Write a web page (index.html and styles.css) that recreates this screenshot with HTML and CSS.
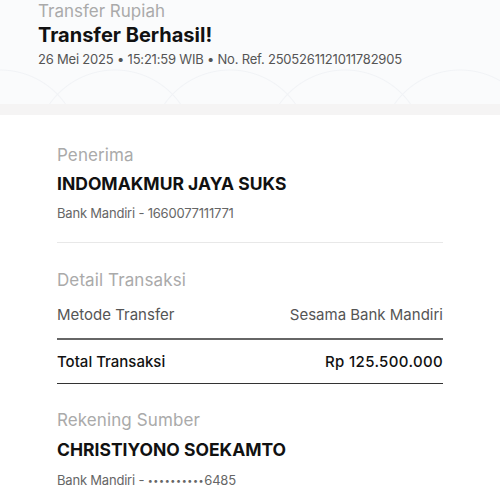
FILE: index.html
```html
<html>
    <head>
        <link rel="stylesheet" href="styles.css">
    </head>
    <body>
        <div class="header">
            <div class="kind">Transfer Rupiah</div>
            <div class="status">Transfer Berhasil!</div>
            <div class="meta">26 Mei 2025 &bull; 15:21:59 WIB &bull; No. Ref. 2505261121011782905</div>
        </div>
        <div class="strip"></div>
        <div class="card">
            <div class="section">
                <div class="label">Penerima</div>
                <div class="name">INDOMAKMUR JAYA SUKS</div>
                <div class="account">Bank Mandiri - 1660077111771</div>
            </div>
            <div class="section detail">
                <div class="label">Detail Transaksi</div>
                <div class="row">
                    <span>Metode Transfer</span>
                    <span>Sesama Bank Mandiri</span>
                </div>
                <div class="row total">
                    <span>Total Transaksi</span>
                    <span class="amount">Rp 125.500.000</span>
                </div>
            </div>
            <div class="section source">
                <div class="label">Rekening Sumber</div>
                <div class="name">CHRISTIYONO SOEKAMTO</div>
                <div class="account">Bank Mandiri - <span class="mask">&bull;&bull;&bull;&bull;&bull;&bull;&bull;&bull;&bull;&bull;</span>6485</div>
            </div>
        </div>
    </body>
</html>
```

FILE: styles.css
```css
body
{
    margin:0;
    background:#fff;
    font-family:Inter,"Noto Sans",sans-serif;
    color:#111;
}
.header
{
    height:104px;
    box-sizing:border-box;
    padding:0 38px;
    background-color:#fafbfc;
    background-image:
        radial-gradient(circle at 0 150px, transparent 79px, #f1f3f6 80px, transparent 81px),
        radial-gradient(circle at 115px 150px, transparent 79px, #f1f3f6 80px, transparent 81px),
        radial-gradient(circle at 230px 150px, transparent 79px, #f1f3f6 80px, transparent 81px),
        radial-gradient(circle at 345px 150px, transparent 79px, #f1f3f6 80px, transparent 81px),
        radial-gradient(circle at 460px 150px, transparent 79px, #f1f3f6 80px, transparent 81px);
}
.kind
{
    font-size:17px;
    line-height:22px;
    color:#aaa;
}
.status
{
    font-size:20px;
    font-weight:700;
    line-height:26px;
}
.meta
{
    font-size:13px;
    line-height:16px;
    color:#555;
    margin-top:3px;
    letter-spacing:-0.2px;
}
.strip
{
    height:11px;
    background:#f5f4f4;
}
.card
{
    padding:29px 57px 0;
}
.section
{
    padding-bottom:21px;
    border-bottom:1px solid #e8e8e8;
}
.label
{
    font-size:17px;
    line-height:22px;
    color:#aaa;
    letter-spacing:0.1px;
}
.name
{
    font-size:17.5px;
    font-weight:700;
    line-height:20px;
    margin-top:8px;
}
.account
{
    font-size:13px;
    line-height:16px;
    color:#666;
    margin-top:11px;
    letter-spacing:-0.2px;
}
.mask
{
    font-size:9px;
    letter-spacing:0.6px;
    vertical-align:1px;
}
.detail
{
    padding-top:26px;
    padding-bottom:0;
    border-bottom:none;
}
.row
{
    display:flex;
    justify-content:space-between;
    font-size:15px;
    line-height:18px;
    color:#555;
    padding:15px 0 14px;
    border-bottom:2px solid #666;
}
.row.total
{
    color:#111;
    font-weight:500;
    padding:13px 0 12px;
    border-bottom:1.5px solid #333;
}
.amount
{
    letter-spacing:0.35px;
}
.source
{
    padding-top:25px;
    border-bottom:none;
}
.source .name
{
    margin-top:9px;
}
.source .account
{
    margin-top:12px;
}
```
